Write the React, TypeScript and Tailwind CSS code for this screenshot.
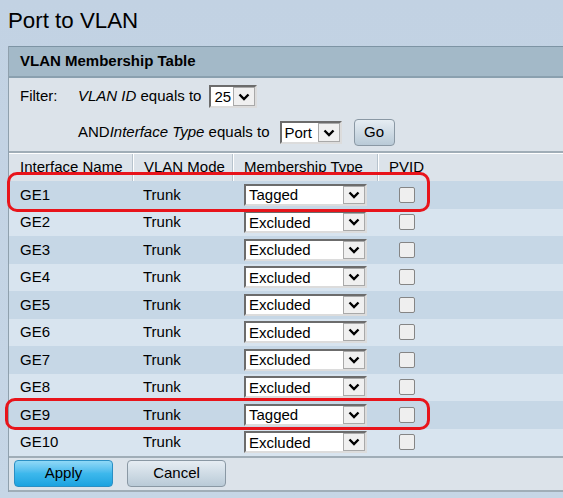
import React from "react";

const rows = [
  { name: "GE1", type: "Tagged" },
  { name: "GE2", type: "Excluded" },
  { name: "GE3", type: "Excluded" },
  { name: "GE4", type: "Excluded" },
  { name: "GE5", type: "Excluded" },
  { name: "GE6", type: "Excluded" },
  { name: "GE7", type: "Excluded" },
  { name: "GE8", type: "Excluded" },
  { name: "GE9", type: "Tagged" },
  { name: "GE10", type: "Excluded" },
];

function Chevron() {
  return (
    <svg width="12" height="8" viewBox="0 0 12 8">
      <polyline points="1.5,1.5 6,6 10.5,1.5" fill="none" stroke="#000" strokeWidth="2.4" />
    </svg>
  );
}

function FakeSelect({ value, width, height }: { value: string; width: string; height: string }) {
  return (
    <div
      className={`flex items-stretch bg-white border-2 border-t-[#6c6c6c] border-l-[#6c6c6c] border-r-[#dcdcdc] border-b-[#dcdcdc] ${width} ${height}`}
    >
      <span className="flex-1 flex items-center pl-[3px] text-[15px] leading-none text-black">{value}</span>
      <span className="w-[22px] flex items-center justify-center bg-[#f0f0f0] border border-[#a9a9a9]">
        <Chevron />
      </span>
    </div>
  );
}

export default function App() {
  return (
    <div
      className="relative w-[563px] h-[498px] overflow-hidden bg-gradient-to-b from-[#c2d2e3] to-[#c6d6e6] text-black"
      style={{ fontFamily: '"Liberation Sans", Arial, sans-serif' }}
    >
      {/* Page title */}
      <h1 className="pt-[8px] pl-[8px] text-[22.3px] leading-[26px] font-normal">Port to VLAN</h1>

      {/* Panel */}
      <div className="mt-[12px] ml-[8px] border-l border-[#8fa0ad] bg-[#dce3ea]">
        {/* Header bar */}
        <div className="h-[32px] flex items-center pl-[11px] bg-[#a3b9c8] border-t border-b-2 border-t-[#7d94a4] border-b-[#8aa0af] text-[15px] font-bold">
          VLAN Membership Table
        </div>

        {/* Filter */}
        <div className="pt-[7px] pb-[5px] text-[15px]">
          <div className="flex items-center h-[23px]">
            <span className="w-[69px] pl-[11px]">Filter:</span>
            <span>
              <i>VLAN ID</i> equals to
            </span>
            <span className="ml-[8px]">
              <FakeSelect value="25" width="w-[48px]" height="h-[23px]" />
            </span>
          </div>
          <div className="flex items-center h-[27px] mt-[11px] pl-[69px]">
            <span>
              AND<i>Interface Type</i> equals to
            </span>
            <span className="ml-[10px]">
              <FakeSelect value="Port" width="w-[62px]" height="h-[23px]" />
            </span>
            <button className="ml-[12px] w-[41px] h-[27px] rounded-[4px] border border-[#8a98a4] bg-gradient-to-b from-[#e6edf3] to-[#b9cad7] text-[15px] text-black">
              Go
            </button>
          </div>
        </div>

        {/* Table */}
        <div className="border-t-2 border-[#a0adb7]">
          <div className="flex h-[28px] items-center border-t border-white text-[15px] bg-[#dce3ea]">
            <div className="w-[124px] pl-[11px] h-full flex items-center border-r border-[#b7c3cd]">Interface Name</div>
            <div className="w-[100px] pl-[10px] h-full flex items-center border-l border-white border-r border-r-[#b7c3cd]">VLAN Mode</div>
            <div className="w-[145px] pl-[10px] h-full flex items-center border-l border-white border-r border-r-[#b7c3cd]">Membership Type</div>
            <div className="flex-1 pl-[10px] h-full flex items-center border-l border-white">PVID</div>
          </div>
          {rows.map((r, i) => (
            <div
              key={r.name}
              className={`flex h-[27.5px] items-center text-[15px] ${i % 2 === 0 ? "bg-[#c6d7e6]" : "bg-[#d8e4ef]"}`}
            >
              <div className="w-[124px] pl-[11px]">{r.name}</div>
              <div className="w-[102px] pl-[10px]">Trunk</div>
              <div className="w-[145px] pl-[9px]">
                <FakeSelect value={r.type} width="w-[123px]" height="h-[22px]" />
              </div>
              <div className="pl-[19px] flex items-center">
                <span className="block w-[16px] h-[16px] rounded-[2px] border border-[#858585] bg-[#efefef]" />
              </div>
            </div>
          ))}
        </div>

        {/* Actions */}
        <div className="h-[36px] flex items-start pt-[2px] pl-[5px] gap-[14px] border-t-2 border-b-2 border-[#a0adb7]">
          <button className="w-[99px] h-[27px] rounded-[4px] border border-[#2b8fc4] bg-gradient-to-b from-[#8fd8f7] via-[#3db8ec] to-[#1aa3e0] text-[15px] text-black">
            Apply
          </button>
          <button className="w-[99px] h-[27px] rounded-[4px] border border-[#8a98a4] bg-gradient-to-b from-[#e6edf3] to-[#b9cad7] text-[15px] text-black">
            Cancel
          </button>
        </div>
      </div>

      {/* Red annotation outlines */}
      <div className="absolute left-[7px] top-[172px] w-[423px] h-[40px] rounded-[10px] border-[3px] border-[#e8141b]" />
      <div className="absolute left-[5px] top-[398px] w-[425px] h-[32px] rounded-[10px] border-[3px] border-[#e8141b]" />
    </div>
  );
}
